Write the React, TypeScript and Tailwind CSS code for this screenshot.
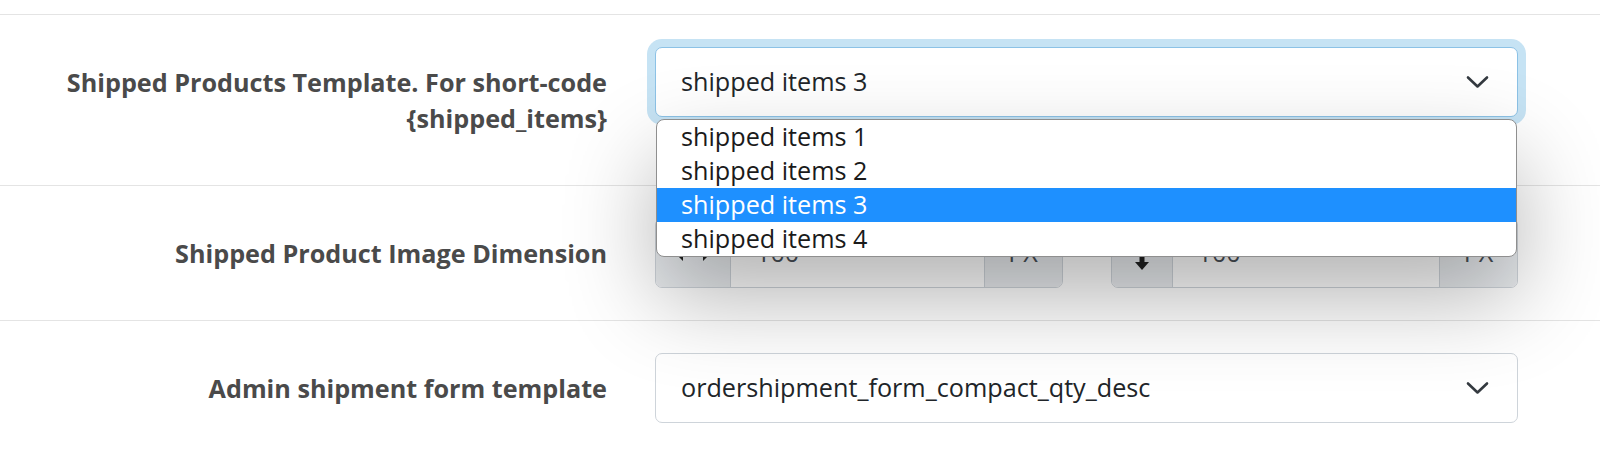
import React from "react";

const Chevron = () => (
  <svg width="23" height="14" viewBox="0 0 23 14" fill="none">
    <path d="M2 2.5 L11.5 11.5 L21 2.5" stroke="#343a40" strokeWidth="2.6" strokeLinecap="round" strokeLinejoin="round" />
  </svg>
);

const ArrowsH = () => (
  <svg width="38" height="22" viewBox="0 0 38 22" fill="#222">
    <path d="M1 11 L9 3 L9 8 L29 8 L29 3 L37 11 L29 19 L29 14 L9 14 L9 19 Z" />
  </svg>
);

const ArrowsV = () => (
  <svg width="16" height="36" viewBox="0 0 16 36" fill="#222">
    <path d="M8 1 L15 9 L10.5 9 L10.5 27 L15 27 L8 35 L1 27 L5.5 27 L5.5 9 L1 9 Z" />
  </svg>
);

const Label = ({ children }: { children: React.ReactNode }) => (
  <div className="w-[607px] shrink-0 text-right py-[17px] leading-[36px] text-[25.2px] font-bold text-[#4a4a4a]">
    {children}
  </div>
);

const InputGroup = ({ icon, prependW }: { icon: React.ReactNode; prependW: string }) => (
  <div className="flex h-[70px] flex-1 rounded-[7px] border border-[#ced4da] overflow-hidden">
    <div className={`${prependW} flex items-center justify-center bg-[#e9ecef] border-r border-[#ced4da]`}>{icon}</div>
    <div className="flex-1 flex items-center pl-[25px] bg-white text-[25.2px] text-[#495057]">100</div>
    <div className="w-[78px] flex items-center justify-center bg-[#e9ecef] border-l border-[#ced4da] text-[25.2px] text-[#495057]">
      PX
    </div>
  </div>
);

export default function App() {
  const options = ["shipped items 1", "shipped items 2", "shipped items 3", "shipped items 4"];
  return (
    <div className="w-[1600px] h-[452px] bg-white overflow-hidden font-['Open_Sans',sans-serif]">
      <div className="h-[14px]" />
      <div className="border-t border-[#e4e4e4]">
        {/* Row 1 */}
        <div className="flex gap-[48px] py-[32px] border-b border-[#e4e4e4]">
          <Label>
            Shipped Products Template. For short-code
            <br />
            {"{shipped_items}"}
          </Label>
          <div className="w-[863px] relative">
            <div className="h-[70px] flex items-center justify-between pl-[25px] pr-[28px] rounded-[7px] border border-[#8cc2e6] bg-white shadow-[0_0_0_8px_#c6e3f4] text-[25.2px] text-[#212529]">
              <span>shipped items 3</span>
              <Chevron />
            </div>
            <div className="absolute z-10 top-[72px] left-[1px] right-[1px] bg-white border border-[#8f8f8f] rounded-[8px] overflow-hidden shadow-[0_40px_90px_rgba(0,0,0,0.3)]">
              {options.map((o, i) => (
                <div
                  key={o}
                  className={
                    i === 2
                      ? "h-[34px] flex items-center pl-[24px] text-[25.2px] bg-[#1e90ff] text-white"
                      : "h-[34px] flex items-center pl-[24px] text-[25.2px] text-[#1a1a1a]"
                  }
                >
                  {o}
                </div>
              ))}
            </div>
          </div>
        </div>
        {/* Row 2 */}
        <div className="flex gap-[48px] py-[32px] border-b border-[#e4e4e4]">
          <Label>Shipped Product Image Dimension</Label>
          <div className="w-[863px] flex gap-[48px]">
            <InputGroup icon={<ArrowsH />} prependW="w-[75px]" />
            <InputGroup icon={<ArrowsV />} prependW="w-[61px]" />
          </div>
        </div>
        {/* Row 3 */}
        <div className="flex gap-[48px] py-[32px]">
          <Label>Admin shipment form template</Label>
          <div className="w-[863px]">
            <div className="h-[70px] flex items-center justify-between pl-[25px] pr-[28px] rounded-[7px] border border-[#ced4da] bg-white text-[25.2px] text-[#212529]">
              <span>ordershipment_form_compact_qty_desc</span>
              <Chevron />
            </div>
          </div>
        </div>
      </div>
    </div>
  );
}
